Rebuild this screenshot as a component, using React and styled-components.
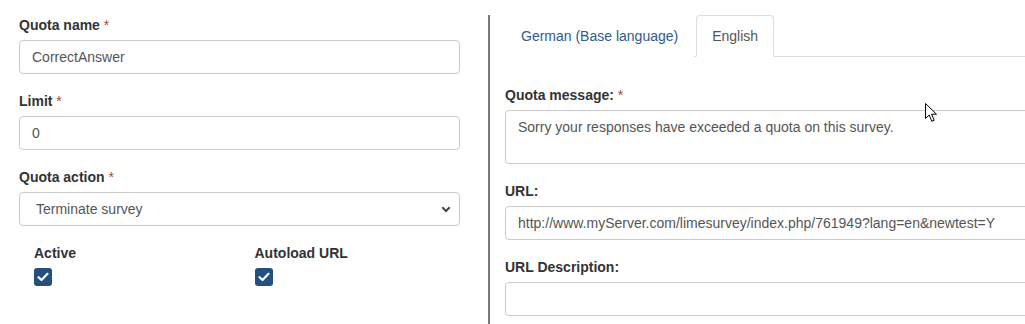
import React from "react";
import styled, { createGlobalStyle } from "styled-components";

const Global = createGlobalStyle`
  html, body { margin: 0; padding: 0; overflow: hidden; background: #fff; }
  body { font-family: "Liberation Sans", Arial, sans-serif; font-size: 14px; line-height: 20px; color: #333; }
  * { box-sizing: border-box; }
`;

const Page = styled.div`
  position: relative;
  display: flex;
  align-items: stretch;
  width: 1070px;
  min-height: 324px;
  padding-top: 15px;
`;

const LeftCol = styled.div`
  width: 441px;
  margin-left: 19px;
  flex: none;
`;

const Divider = styled.div`
  flex: none;
  width: 2px;
  margin-left: 28px;
  background: #7a7a7a;
`;

const RightCol = styled.div`
  flex: none;
  width: 545px;
  padding-left: 15px;
`;

const Group = styled.div`
  margin-bottom: 17px;
`;

const Label = styled.label`
  display: block;
  font-weight: bold;
  font-size: 14px;
  line-height: 20px;
  color: #333;
  margin-bottom: 5px;
`;

const Req = styled.span`
  color: #a94442;
  font-weight: normal;
`;

const Input = styled.input`
  display: block;
  width: 100%;
  height: 34px;
  padding: 6px 12px;
  font-family: "Liberation Sans", Arial, sans-serif;
  font-size: 14px;
  line-height: 20px;
  color: #555;
  background: #fff;
  border: 1px solid #ccc;
  border-radius: 4px;
  outline: none;
`;

const TextArea = styled.textarea`
  display: block;
  width: 100%;
  height: 54px;
  padding: 6px 12px;
  font-family: "Liberation Sans", Arial, sans-serif;
  font-size: 14px;
  line-height: 20px;
  color: #555;
  background: #fff;
  border: 1px solid #ccc;
  border-radius: 4px;
  resize: none;
  outline: none;
  overflow: hidden;
`;

const SelectWrap = styled.div`
  position: relative;
`;

const Select = styled.select`
  display: block;
  width: 100%;
  height: 34px;
  padding: 6px 12px 6px 16px;
  font-family: "Liberation Sans", Arial, sans-serif;
  font-size: 14px;
  color: #555;
  background: #fff;
  border: 1px solid #ccc;
  border-radius: 4px;
  appearance: none;
  -webkit-appearance: none;
  outline: none;
`;

const Chevron = styled.svg`
  position: absolute;
  right: 9px;
  top: 14px;
  pointer-events: none;
`;

const CheckRow = styled.div`
  display: grid;
  grid-template-columns: 1fr 1fr;
`;

const CheckCell = styled.div`
  padding-left: 15px;
`;

const CheckBox = styled.span`
  display: flex;
  align-items: center;
  justify-content: center;
  width: 18px;
  height: 18px;
  border-radius: 3px;
  background: #244f7e;
`;

const Tabs = styled.ul`
  display: flex;
  list-style: none;
  margin: 0 0 28px 0;
  padding: 0;
  border-bottom: 1px solid #ddd;
`;

const Tab = styled.li`
  margin-bottom: -1px;
  margin-right: 2px;
  padding: 10px 15px;
  line-height: 20px;
  font-size: 14px;
  border: 1px solid ${(p) => (p.$active ? "#ddd" : "transparent")};
  border-bottom-color: ${(p) => (p.$active ? "#fff" : "transparent")};
  border-radius: 4px 4px 0 0;
  background: #fff;
  color: ${(p) => (p.$active ? "#555" : "#2f5b8a")};
`;

const Cursor = styled.svg`
  position: absolute;
  left: 925px;
  top: 103px;
`;

function Check() {
  return (
    <CheckBox>
      <svg width="12" height="10" viewBox="0 0 12 10">
        <path d="M1.5 5.2 L4.5 8 L10.5 1.8" fill="none" stroke="#fff" strokeWidth="2.2" strokeLinecap="round" strokeLinejoin="round" />
      </svg>
    </CheckBox>
  );
}

export default function App() {
  return (
    <>
      <Global />
      <Page>
        <LeftCol>
          <Group>
            <Label>Quota name <Req>*</Req></Label>
            <Input defaultValue="CorrectAnswer" />
          </Group>
          <Group>
            <Label>Limit <Req>*</Req></Label>
            <Input defaultValue="0" />
          </Group>
          <Group>
            <Label>Quota action <Req>*</Req></Label>
            <SelectWrap>
              <Select defaultValue="t">
                <option value="t">Terminate survey</option>
              </Select>
              <Chevron width="10" height="7" viewBox="0 0 10 7">
                <path d="M1.3 1.3 L5 5 L8.7 1.3" fill="none" stroke="#444" strokeWidth="2" />
              </Chevron>
            </SelectWrap>
          </Group>
          <CheckRow>
            <CheckCell>
              <Label>Active</Label>
              <Check />
            </CheckCell>
            <CheckCell>
              <Label>Autoload URL</Label>
              <Check />
            </CheckCell>
          </CheckRow>
        </LeftCol>
        <Divider />
        <RightCol>
          <Tabs>
            <Tab>German (Base language)</Tab>
            <Tab $active>English</Tab>
          </Tabs>
          <Group>
            <Label>Quota message: <Req>*</Req></Label>
            <TextArea defaultValue="Sorry your responses have exceeded a quota on this survey." />
          </Group>
          <Group>
            <Label>URL:</Label>
            <Input defaultValue="http://www.myServer.com/limesurvey/index.php/761949?lang=en&newtest=Y" />
          </Group>
          <Group>
            <Label>URL Description:</Label>
            <Input defaultValue="" />
          </Group>
        </RightCol>
        <Cursor width="14" height="20" viewBox="0 0 14 20">
          <path d="M0.5 0.5 L0.5 15.5 L4.2 12 L6.8 18.3 L9.2 17.3 L6.6 11.2 L11.5 11.2 Z" fill="#fff" stroke="#000" strokeWidth="1" strokeLinejoin="miter" />
        </Cursor>
      </Page>
    </>
  );
}
